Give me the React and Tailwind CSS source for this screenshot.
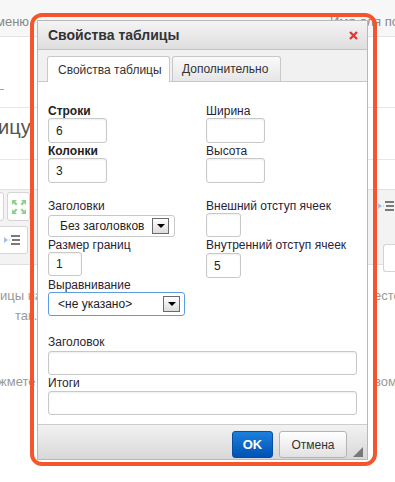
import React from "react";

const ExpandIcon = () => (
  <svg width="16" height="16" viewBox="0 0 16 16">
    <g fill="#8fd08f">
      <path d="M1 1h5L4.3 2.7 6.5 4.9 4.9 6.5 2.7 4.3 1 6z" />
      <path d="M15 1v5l-1.7-1.7-2.2 2.2-1.6-1.6 2.2-2.2L10 1z" />
      <path d="M1 15v-5l1.7 1.7 2.2-2.2 1.6 1.6-2.2 2.2L6 15z" />
      <path d="M15 15h-5l1.7-1.7-2.2-2.2 1.6-1.6 2.2 2.2L15 10z" />
    </g>
  </svg>
);

const IndentIcon = () => (
  <svg width="16" height="12" viewBox="0 0 16 12">
    <path d="M0 3l4 3-4 3z" fill="#9cc3ec" />
    <rect x="5" y="5.5" width="1" height="1" fill="#9cc3ec" />
    <rect x="7" y="1" width="9" height="2" fill="#7a7a7a" />
    <rect x="8" y="5" width="8" height="2" fill="#7a7a7a" />
    <rect x="7" y="9" width="9" height="2" fill="#7a7a7a" />
  </svg>
);

const Label = ({ children, bold }) => (
  <div className={`h-[14px] leading-[14px] text-[12px] ${bold ? "font-bold text-[#222]" : "text-[#2a2238]"}`}>
    {children}
  </div>
);

const TextBox = ({ value = "", className = "" }) => (
  <input
    readOnly
    defaultValue={value}
    className={`block h-[25px] rounded-[3px] border border-[#c8c8c8] bg-white px-[7px] text-[12px] text-[#222] outline-none shadow-[inset_0_1px_2px_rgba(0,0,0,0.07)] ${className}`}
  />
);

const SelectBox = ({ value, className = "" }) => (
  <div className={`flex items-center justify-between rounded-[3px] border bg-white text-[12px] text-[#222] ${className}`}>
    <span>{value}</span>
    <span className="flex w-[17px] h-[16px] items-center justify-center border border-[#6a6a6a] bg-gradient-to-b from-white to-[#dcdcdc]">
      <span className="w-0 h-0 border-l-[4px] border-r-[4px] border-t-[4px] border-l-transparent border-r-transparent border-t-black" />
    </span>
  </div>
);

export default function App() {
  return (
    <div className="relative w-[395px] h-[482px] overflow-hidden bg-white font-['Liberation_Sans',Arial,sans-serif]">
      {/* page behind the dialog */}
      <div className="flex flex-col text-[13px] text-[#999]">
        <div className="h-[37px] pt-[7px] flex items-center justify-between bg-[#f7f7f7] border-b border-[#e4e4e4] text-[#888]">
          <span className="-ml-[4px]">меню</span>
          <span className="w-[65px] whitespace-nowrap overflow-hidden">Имя для пользователя</span>
        </div>
        <div className="h-[71px] flex flex-col justify-end pb-[17px] border-b border-[#e6e6e6]">
          <span className="w-[4px] h-[1px] bg-[#f08a5d]" />
        </div>
        <div className="h-[52px] pt-[7px] border-b border-[#e6e6e6] text-[20px] leading-[24px] text-[#555]">
          <span className="-ml-[2px]">ицу</span>
        </div>
        <div className="h-[29px]" />
        <div className="h-[76px] pt-[2px] flex flex-col gap-[5px] bg-[#f3f3f3] border-y border-[#e0e0e0]">
          <div className="flex justify-between">
            <div className="flex gap-[3px]">
              <div className="-ml-[20px] w-[24px] h-[29px] rounded-[3px] border border-[#d4d4d4] bg-white" />
              <div className="w-[23px] h-[29px] rounded-[3px] border border-[#d4d4d4] bg-white flex items-center justify-center">
                <ExpandIcon />
              </div>
            </div>
            <div className="w-[17px] pt-[8px]">
              <IndentIcon />
            </div>
          </div>
          <div className="flex justify-between">
            <div className="-ml-[4px] w-[32px] h-[28px] rounded-[3px] border border-[#d4d4d4] bg-white flex items-center justify-center">
              <IndentIcon />
            </div>
            <div className="w-[12px] mt-[18px] h-[28px] rounded-l-[3px] border border-r-0 border-[#d4d4d4] bg-white" />
          </div>
        </div>
        <div className="mt-[21px] leading-[20px]">
          <div className="flex justify-between">
            <span>ицы на</span>
            <span className="w-[21px] whitespace-nowrap overflow-hidden">есто,</span>
          </div>
          <div className="pl-[15px]">так.</div>
          <div className="mt-[46px] flex justify-between">
            <span className="-ml-[2px]">жмете</span>
            <span className="w-[21px] whitespace-nowrap overflow-hidden">вом</span>
          </div>
        </div>
      </div>

      {/* highlighted dialog */}
      <div className="absolute left-[30px] top-[13px] w-[347px] h-[453px] rounded-[12px] border-4 border-[#f4552d] pl-[3px] pt-[3px]">
        <div className="w-[331px] h-[440px] flex flex-col border border-[#b8b8b8] bg-white">
          <div className="h-[29px] flex items-center justify-between pl-[10px] pr-[9px] border-b border-[#c4c4c4] bg-gradient-to-b from-[#f4f4f4] to-[#dedede]">
            <span className="text-[14px] font-bold text-[#333]">Свойства таблицы</span>
            <svg width="9" height="9" viewBox="0 0 9 9">
              <path d="M1 1l7 7M8 1L1 8" stroke="#e33a30" strokeWidth="2.4" />
            </svg>
          </div>
          <div className="h-[32px] pt-[6px] pl-[9px] flex gap-[2px] items-end bg-[#f1f1f1] border-b border-[#c8c8c8]">
            <div className="-mb-px h-[26px] w-[123px] pl-[10px] flex items-center rounded-t-[3px] border border-b-0 border-[#c8c8c8] bg-white text-[12px] text-[#333]">
              Свойства таблицы
            </div>
            <div className="h-[25px] w-[109px] pl-[9px] flex items-center rounded-t-[3px] border border-b-0 border-[#c8c8c8] bg-gradient-to-b from-[#fafafa] to-[#e6e6e6] text-[12px] text-[#333]">
              Дополнительно
            </div>
          </div>

          <div className="flex-1 px-[10px] pt-[22px] flex flex-col">
            <div className="flex">
              <div className="w-[158px] flex flex-col">
                <Label bold>Строки</Label>
                <TextBox value="6" className="w-[59px]" />
                <div className="h-px" />
                <Label bold>Колонки</Label>
                <TextBox value="3" className="w-[59px]" />
                <div className="h-[16px]" />
                <Label>Заголовки</Label>
                <SelectBox value="Без заголовков" className="mt-[2px] w-[127px] h-[22px] pl-[11px] pr-[5px] border-[#c8c8c8]" />
                <div className="h-px" />
                <Label>Размер границ</Label>
                <TextBox value="1" className="w-[34px] !h-[24px]" />
                <div className="h-[2px]" />
                <Label>Выравнивание</Label>
                <SelectBox value="<не указано>" className="w-[137px] h-[24px] pl-[9px] pr-[4px] border-[#5d9ce0]" />
              </div>
              <div className="flex flex-col">
                <Label>Ширина</Label>
                <TextBox className="w-[59px]" />
                <div className="h-px" />
                <Label>Высота</Label>
                <TextBox className="w-[59px]" />
                <div className="h-[16px]" />
                <Label>Внешний отступ ячеек</Label>
                <TextBox className="w-[35px] !h-[24px]" />
                <div className="h-px" />
                <Label>Внутренний отступ ячеек</Label>
                <TextBox value="5" className="w-[35px] mt-px" />
              </div>
            </div>
            <div className="mt-[19px]">
              <Label>Заголовок</Label>
              <TextBox className="w-[309px] mt-[2px] !h-[24px]" />
              <div className="h-px" />
              <Label>Итоги</Label>
              <TextBox className="w-[309px] mt-px !h-[24px]" />
            </div>
          </div>

          <div className="h-[35px] flex justify-end items-start pt-[6px] pr-[4px] border-t border-[#cccccc] bg-gradient-to-b from-[#f2f2f2] to-[#d8d8d8]">
            <button className="w-[41px] h-[27px] rounded-[3px] border border-[#0b4d9c] bg-gradient-to-b from-[#1d7fdc] to-[#0053b4] text-[13px] font-bold text-white">
              OK
            </button>
            <button className="ml-[6px] w-[68px] h-[27px] rounded-[3px] border border-[#b4b4b4] bg-gradient-to-b from-white to-[#e1e1e1] text-[12px] text-[#333]">
              Отмена
            </button>
            <svg className="ml-[6px] mt-[16px]" width="10" height="10" viewBox="0 0 10 10">
              <path d="M10 0v10H0z" fill="#787878" />
            </svg>
          </div>
        </div>
      </div>
    </div>
  );
}
